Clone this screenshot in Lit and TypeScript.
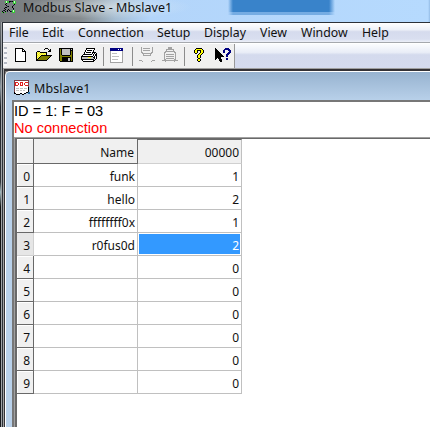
import { LitElement, html, svg, css } from "lit";
import { customElement, property, state } from "lit/decorators.js";

const PALETTE: Record<string, string> = {
  "#": "#000000",
  w: "#ffffff",
  y: "#ffff00",
  c: "#f4ee82",
  o: "#808000",
  g: "#a3a3a3",
  s: "#c0c0c0",
  n: "#000080",
  r: "#e02020",
  m: "#7c4048",
  b: "#2a6fa8",
  l: "#c8ffc8",
  e: "#37c837",
  d: "#17233c",
};

const ICONS: Record<string, string[]> = {
  app: [
    "..............",
    "...elee##d#ele.",
    "...eleed...ele.",
    "....#......eee.",
    "...#........#..",
    "....#......d...",
    ".....d#...#....",
    "...##.....#....",
    "..#........#...",
    "...#..#....d...",
    ".d#..#.#..ele..",
    "#..#.d..#dele..",
    "e#.e......eee..",
  ],
  new: [
    "########....",
    "#wwwwww##...",
    "#wwwwww#w#..",
    "#wwwwww####.",
    "#wwwwwwwww#.",
    "#wwwwwwwww#.",
    "#wwwwwwwww#.",
    "#wwwwwwwww#.",
    "#wwwwwwwww#.",
    "#wwwwwwwww#.",
    "#wwwwwwwww#.",
    "#wwwwwwwww#.",
    "#wwwwwwwww#.",
    "###########.",
  ],
  open: [
    ".........###....",
    "........#...#.#.",
    ".............##.",
    ".###........###.",
    "#cyc#######.....",
    "#ycycycycy#.....",
    "#cycycycyc#.....",
    "#ycyc###########",
    "#cyc#ooooooooo#.",
    "#yc#ooooooooo#..",
    "#c#ooooooooo#...",
    "##ooooooooo#....",
    "###########.....",
  ],
  save: [
    "##############",
    "#o#ssssssss#s#",
    "#o#ssssssss###",
    "#o#ssssssss#o#",
    "#o#ssssssss#o#",
    "#o#ssssssss#o#",
    "#o#ssssssss#o#",
    "#oo########oo#",
    "#oooooooooooo#",
    "#oo#########o#",
    "#oo######ss#o#",
    "#oo######ss#o#",
    "#oo######ss#o#",
    ".#############",
  ],
  print: [
    ".....#########..",
    ".....#wwwwwww#..",
    "....#w#####w#...",
    "....#wwwwwww#...",
    "...#w#####w####.",
    "...#wwwwwww#w#w#",
    "..#########w#w##",
    ".#wwwwwwwwww#w##",
    "############w#w#",
    "#ssssssyyyss##w#",
    "#ssssssssssss#w#",
    "#############w#.",
    ".#wwwwwwwwww##..",
    "..###########...",
  ],
  win: [
    "nnnnnnnnnnnnn",
    "nnnnnnnnwnwnn",
    "nnnnnnnnnnnnn",
    "gwwwwwwwwwwwg",
    "gwwwwwwwwwwwg",
    "gwssssswwwwwg",
    "gwwwwwwwwwwwg",
    "gwwwwwwwwwwwg",
    "gwssssssswwwg",
    "gwwwwwwwwwwwg",
    "gwwwwwwwwwwwg",
    "gwsssssswwwwg",
    "gwwwwwwwwwwwg",
    "gwwwwwwwwwwwg",
    "ggggggggggggg",
  ],
  connect: [
    "..g..........g..",
    "..g.ggggggg..g..",
    "..g..........g..",
    "..g.ggggggg..g..",
    "..g..........g..",
    "..gg........gg..",
    "...gggggggggg...",
    "....g......g....",
    "....gggggggg....",
    "................",
    "................",
    "................",
    "................",
    "ggg..........ggg",
    "...g........g...",
  ],
  disconnect: [
    "......gggg......",
    "......gggg......",
    "....gggggggg....",
    "....g......g....",
    "...gggggggggg...",
    "..gg........gg..",
    "..g..........g..",
    "..g.gggggggg.g..",
    "..g..........g..",
    "..g.gggggggg.g..",
    "..g..........g..",
    "..g.gggggggg.g..",
    "..gg........gg..",
    "gggggggggggggggg",
    "...g........g...",
  ],
  about: [
    "..######..",
    ".#yyyyyy#.",
    "#yy####yy#",
    "#yy#..#yy#",
    "#yy#..#yy#",
    ".##..#yy#.",
    "....#yy#..",
    "...#yy#...",
    "...#yy#...",
    "...#yy#...",
    "....##....",
    "...#yy#...",
    "...#yy#...",
    "....##....",
  ],
  help: [
    "#.........nnnn..",
    "##.......nnnnnn.",
    "###.....nn...nnn",
    "####....nn....nn",
    "#####...nn...nnn",
    "######......nnn.",
    "#######....nnn..",
    "########...nn...",
    "#########..nn...",
    "######..........",
    "##.###.....nn...",
    "#...###....nn...",
    "....###.........",
    ".....##.........",
  ],
  doc: [
    "mmmmmmmmmmmmmmm.",
    "mwwwwwwwwwwwwwm.",
    "mrrrwwrrrwwrrrm.",
    "mrwwrwrwrwrwwwm.",
    "mrwwrwrwrwrwwwm.",
    "mrrrwwrrrwwrrrm.",
    "mwwwwwwwwwwwwwm.",
    "mwwwwwwwwwwwww#.",
    "mwssswssswsssw#.",
    "mwwwwwwwwwwwww#.",
    "mwssswsswsswww#.",
    "mwwwwwwwwwwwww#.",
    "#wwwwwwwwwww##bb",
    "##wwww##ww##..bb",
    "..####..##......",
  ],
};

/** A bitmap icon drawn from rows of palette keys. */
@customElement("pixel-icon")
export class PixelIcon extends LitElement {
  @property() name = "new";

  static styles = css`
    :host { display: block; }
    svg { display: block; }
  `;

  render() {
    const rows = ICONS[this.name];
    const w = Math.max(...rows.map((r) => r.length));
    const h = rows.length;
    return html`<svg width=${w} height=${h} viewBox="0 0 ${w} ${h}" shape-rendering="crispEdges">
      ${rows.map((row, y) =>
        [...row].map((k, x) =>
          PALETTE[k] ? svg`<rect x=${x} y=${y} width="1" height="1" fill=${PALETTE[k]}></rect>` : null
        )
      )}
    </svg>`;
  }
}

@customElement("tool-bar")
export class ToolBar extends LitElement {
  static styles = css`
    :host { display: flex; height: 24px; box-sizing: border-box; background: linear-gradient(#fbfcfe, #e9edf7 35%, #d4daed 45%, #d5dbef); }
    .band { display: grid; grid-template-columns: 12px 21px 23px 22px 22px 7px 22px 7px 23px 22px 10px 21px 16px; width: 232px; background: #f0f0f0; border-right: 1px solid #989898; align-items: start; box-sizing: border-box; }
    .grip { width: 3px; height: 19px; margin: 3px 0 0 1px; background: repeating-linear-gradient(#b6bac4 0 2px, #f8f8fa 2px 5px); }
    .sep { width: 1px; height: 19px; margin-top: 3px; background: #8c8c8c; }
    pixel-icon { margin-top: 4px; }
    .up { margin-top: 3px; }
  `;

  render() {
    return html`<div class="band">
      <span class="grip"></span>
      <pixel-icon name="new"></pixel-icon>
      <pixel-icon name="open"></pixel-icon>
      <pixel-icon name="save"></pixel-icon>
      <pixel-icon name="print"></pixel-icon>
      <span class="sep"></span>
      <pixel-icon name="win"></pixel-icon>
      <span class="sep"></span>
      <pixel-icon name="connect" class="up"></pixel-icon>
      <pixel-icon name="disconnect" class="up"></pixel-icon>
      <span class="sep"></span>
      <pixel-icon name="about"></pixel-icon>
      <pixel-icon name="help"></pixel-icon>
    </div>`;
  }
}

@customElement("register-grid")
export class RegisterGrid extends LitElement {
  @property({ attribute: false }) rows: [string, number][] = [];
  @property({ type: Number }) selected = 0;

  static styles = css`
    :host { display: block; border: solid #696969; border-width: 1px 0 0 2px; flex: 1; background: #fff; font: 12px "Noto Sans", sans-serif; color: #111; }
    .row { display: grid; grid-template-columns: 17px 104px 104px; height: 23px; line-height: 26px; text-align: right; }
    .row > * { box-sizing: border-box; height: 23px; border-right: 1px solid #c0c0c0; border-bottom: 1px solid #c0c0c0; padding-right: 2px; }
    .row > .no { background: #f0f0f0; border-color: #696969; box-shadow: inset 1px 1px #fff; padding-right: 3px; }
    .head { height: 25px; line-height: 28px; }
    .row.head > * { height: 25px; }
    .head > .cap { background: #f0f0f0; border-right-color: #696969; border-bottom-color: #696969; padding-right: 3px; }
    .head > .last { border-top: 1px solid #696969; border-right-color: #c0c0c0; border-bottom-color: #d0d0d0; line-height: 26px; padding-right: 2px; }
    .row > .current { background: #e6e6e6; border-right-color: #d0d0d0; border-bottom-color: #d0d0d0; box-shadow: none; }
    .row > .active { background: #3399ff; background-clip: content-box; padding: 1px; color: #fff; line-height: 24px; }
    .active span { padding-right: 1px; }
  `;

  render() {
    return html`
      <div class="row head"><span class="no"></span><span class="cap">Name</span><span class="cap last">00000</span></div>
      ${this.rows.map(([name, value], i) => {
        const on = i === this.selected;
        return html`<div class="row">
          <span class="no ${on ? "current" : ""}">${i}</span>
          <span>${name}</span>
          <span class=${on ? "active" : ""}><span>${value}</span></span>
        </div>`;
      })}
    `;
  }
}

@customElement("app-root")
export class AppRoot extends LitElement {
  @state() private menu = [
    ["File", 33], ["Edit", 36], ["Connection", 79], ["Setup", 47],
    ["Display", 56], ["View", 41], ["Window", 61], ["Help", 40],
  ] as [string, number][];
  @state() private rows: [string, number][] = [
    ["funk", 1], ["hello", 2], ["ffffffff0x", 1], ["r0fus0d", 2],
    ["", 0], ["", 0], ["", 0], ["", 0], ["", 0], ["", 0],
  ];

  static styles = css`
    :host { display: flex; flex-direction: column; width: 430px; height: 427px; overflow: hidden; font: 12.5px "Noto Sans", sans-serif; color: #111; background: #b6d6fa; }
    .title { display: flex; height: 22px; box-sizing: border-box; padding-left: 2px; gap: 6px; line-height: 16px; letter-spacing: .05px; background:
      radial-gradient(ellipse 84px 12px at 108px 7px, rgba(235, 240, 240, .55), transparent),
      linear-gradient(90deg, transparent 228px, #3983ca 233px, #3983ca 329px, transparent 335px) 0 0 / 430px 12px no-repeat,
      linear-gradient(90deg, transparent 228px, #75ace3 233px, #75ace3 329px, transparent 335px) 0 12px / 430px 3px no-repeat,
      linear-gradient(90deg, #777b7f 0, #858b8e 80px, #a5bdd2 115px, #b3d5fa 150px, #b6dafe 428px, #94bce6); }
    .title span { white-space: nowrap; }
    .main { flex: 1; display: flex; min-height: 0; }
    .edge { width: 2px; background: linear-gradient(#6d7378, #303539 40px, #8b979f 65px, #202328 85px, #33363b 160px, #a0b8bd 170px, #111 185px, #191b1f); border-right: 1px solid #a0a4a8; box-sizing: border-box; }
    .client { flex: 1; display: flex; flex-direction: column; border: solid #2c3138; border-width: 1px 0 0 1px; box-sizing: border-box; }
    .menu { display: flex; height: 20px; line-height: 20px; padding-left: 6px; font-size: 12.3px; border-bottom: 1px solid #a5a8ad; background: linear-gradient(#ffffff, #eef1f8 35%, #d5dbed 46%, #d9dff0 85%, #eceff7); box-sizing: border-box; }
    .gap { height: 1px; background: #fff; }
    .mdi { flex: 1; display: flex; border: solid #a0a0a0; border-width: 1px 0 0 1px; background: #777; }
    .well { flex: 1; display: flex; border: solid #343236; border-width: 2px 0 0 1px; }
    .child { flex: 1; display: flex; flex-direction: column; border: 1px solid #fff; border-width: 1px 0 0 1px; border-radius: 5px 0 0 0; padding-left: 6px; background: linear-gradient(#97b3d0, #b9d1ea 29px); }
    .caption { height: 28px; display: flex; gap: 5px; padding: 8px 0 0 2px; line-height: 17px; letter-spacing: .1px; box-sizing: border-box; }
    .caption span { margin-left: -1px; }
    .view { flex: 1; display: flex; flex-direction: column; border: solid #777; border-width: 2px 0 0 2px; background: #fff; }
    .status { height: 35px; font: 14.6px/17px "Liberation Sans", Arial, sans-serif; box-sizing: border-box; padding-top: 1px; color: #000; }
    .error { color: #f00; }
    .holder { flex: 1; display: flex; border: solid #a0a0a0; border-width: 1px 0 0 1px; }
  `;

  render() {
    return html`
      <div class="title"><pixel-icon name="app"></pixel-icon><span>Modbus Slave - Mbslave1</span></div>
      <div class="main">
        <div class="edge"></div>
        <div class="client">
          <div class="menu">${this.menu.map(([label, width]) => html`<span style="width:${width}px">${label}</span>`)}</div>
          <div class="gap"></div>
          <tool-bar></tool-bar>
          <div class="mdi">
            <div class="well">
              <div class="child">
                <div class="caption"><pixel-icon name="doc"></pixel-icon><span>Mbslave1</span></div>
                <div class="view">
                  <div class="status"><div>ID = 1: F = 03</div><div class="error">No connection</div></div>
                  <div class="holder"><register-grid .rows=${this.rows} .selected=${3}></register-grid></div>
                </div>
              </div>
            </div>
          </div>
        </div>
      </div>
    `;
  }
}
